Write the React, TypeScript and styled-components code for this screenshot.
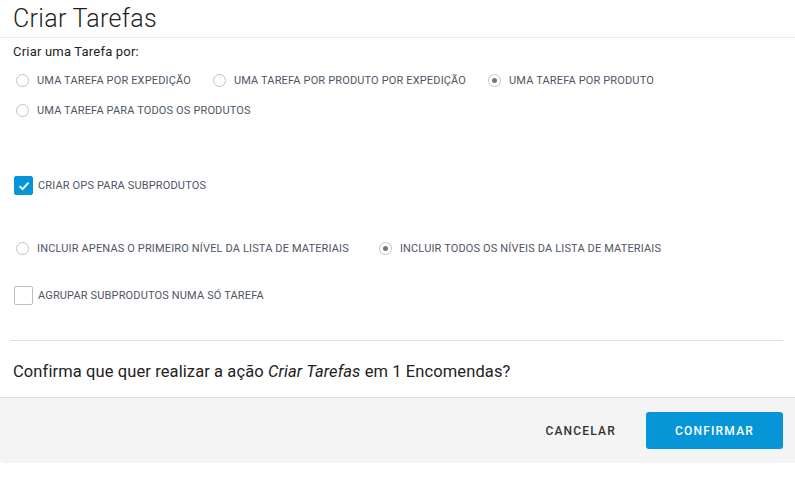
import React, { useState } from 'react';
import styled, { createGlobalStyle } from 'styled-components';

const GlobalStyle = createGlobalStyle`
  html, body {
    margin: 0;
    padding: 0;
    background: #ffffff;
    font-family: Roboto, "Liberation Sans", sans-serif;
  }
`;

const Dialog = styled.div`
  width: 795px;
  background: #fff;
`;

const Header = styled.div`
  height: 37px;
  padding-left: 13px;
  border-bottom: 1px solid #ebebeb;
  display: flex;
  align-items: center;
`;

const Title = styled.h1`
  margin: 0;
  font-size: 25px;
  font-weight: 300;
  letter-spacing: 0.3px;
  color: #1f1f1f;
  line-height: 36px;
`;

const Body = styled.div`
  padding: 5px 12px 0 13px;
`;

const FieldLabel = styled.div`
  font-size: 13px;
  line-height: 18px;
  letter-spacing: 0.2px;
  color: #222;
`;

const OptionGroup = styled.div<{ $top: number; $gap: number }>`
  display: flex;
  flex-wrap: wrap;
  column-gap: ${(p) => p.$gap}px;
  row-gap: 14px;
  margin-top: ${(p) => p.$top}px;
`;

const Option = styled.label`
  display: flex;
  align-items: center;
  gap: 8px;
  height: 16px;
  cursor: pointer;
`;

const RadioCircle = styled.span<{ $checked: boolean }>`
  box-sizing: border-box;
  width: 13px;
  height: 13px;
  margin-left: 3px;
  border-radius: 50%;
  border: 1px solid #c2c2c2;
  background: #fff;
  display: flex;
  align-items: center;
  justify-content: center;

  &::after {
    content: '';
    width: 5px;
    height: 5px;
    border-radius: 50%;
    background: ${(p) => (p.$checked ? '#777' : 'transparent')};
  }
`;

const OptionText = styled.span`
  font-size: 11px;
  letter-spacing: 0.15px;
  text-transform: uppercase;
  color: #4f5564;
  white-space: nowrap;
`;

const CheckRow = styled.label<{ $top: number }>`
  display: flex;
  align-items: center;
  gap: 5px;
  height: 19px;
  margin-top: ${(p) => p.$top}px;
  cursor: pointer;
`;

const CheckBox = styled.span<{ $checked: boolean }>`
  box-sizing: border-box;
  width: 19px;
  height: 19px;
  margin-left: 1px;
  border-radius: 2px;
  border: 1px solid ${(p) => (p.$checked ? '#0696d7' : '#bdbdbd')};
  background: ${(p) => (p.$checked ? '#0696d7' : '#fff')};
  display: flex;
  align-items: center;
  justify-content: center;
`;

const Separator = styled.hr`
  margin: 35px 0 0 -3px;
  border: 0;
  border-top: 1px solid #e0e0e0;
`;

const Question = styled.p`
  margin: 20px 0 14px;
  font-size: 16.5px;
  line-height: 22px;
  letter-spacing: 0.1px;
  color: #222;

  em {
    font-style: italic;
  }
`;

const Footer = styled.div`
  height: 51px;
  padding: 14px 12px 0 0;
  background: #f4f4f4;
  border-top: 1px solid #dcdcdc;
  border-bottom-left-radius: 4px;
  display: flex;
  justify-content: flex-end;
  align-items: flex-start;
`;

const Button = styled.button<{ $primary?: boolean }>`
  height: 37px;
  border: 0;
  border-radius: 3px;
  font-family: Roboto, "Liberation Sans", sans-serif;
  font-size: 12px;
  font-weight: 500;
  letter-spacing: 1.2px;
  cursor: pointer;
  background: ${(p) => (p.$primary ? '#0696d7' : 'transparent')};
  color: ${(p) => (p.$primary ? '#fff' : '#333')};
  width: ${(p) => (p.$primary ? '137px' : 'auto')};
  padding: ${(p) => (p.$primary ? '0' : '0 16px')};
  margin-right: ${(p) => (p.$primary ? '0' : '14px')};
`;

const Check = () => (
  <svg width="12" height="10" viewBox="0 0 12 10">
    <path d="M1.5 5.2 L4.6 8.2 L10.5 1.6" fill="none" stroke="#fff" strokeWidth="1.8" />
  </svg>
);

const taskModes = [
  'Uma tarefa por expedição',
  'Uma tarefa por produto por expedição',
  'Uma tarefa por produto',
  'Uma tarefa para todos os produtos',
];

const levels = [
  'Incluir apenas o primeiro nível da lista de materiais',
  'Incluir todos os níveis da lista de materiais',
];

const App = () => {
  const [mode, setMode] = useState(2);
  const [level, setLevel] = useState(1);
  const [createOps, setCreateOps] = useState(true);
  const [group, setGroup] = useState(false);

  return (
    <Dialog>
      <GlobalStyle />
      <Header>
        <Title>Criar Tarefas</Title>
      </Header>
      <Body>
        <FieldLabel>Criar uma Tarefa por:</FieldLabel>
        <OptionGroup $top={11} $gap={19}>
          {taskModes.map((m, i) => (
            <Option key={m} onClick={() => setMode(i)}>
              <RadioCircle $checked={mode === i} />
              <OptionText>{m}</OptionText>
            </Option>
          ))}
        </OptionGroup>

        <CheckRow $top={58} onClick={() => setCreateOps(!createOps)}>
          <CheckBox $checked={createOps}>{createOps && <Check />}</CheckBox>
          <OptionText>Criar OPs para subprodutos</OptionText>
        </CheckRow>

        <OptionGroup $top={45} $gap={27}>
          {levels.map((l, i) => (
            <Option key={l} onClick={() => setLevel(i)}>
              <RadioCircle $checked={level === i} />
              <OptionText>{l}</OptionText>
            </Option>
          ))}
        </OptionGroup>

        <CheckRow $top={30} onClick={() => setGroup(!group)}>
          <CheckBox $checked={group}>{group && <Check />}</CheckBox>
          <OptionText>Agrupar subprodutos numa só tarefa</OptionText>
        </CheckRow>

        <Separator />
        <Question>
          Confirma que quer realizar a ação <em>Criar Tarefas</em> em 1 Encomendas?
        </Question>
      </Body>
      <Footer>
        <Button>CANCELAR</Button>
        <Button $primary>CONFIRMAR</Button>
      </Footer>
    </Dialog>
  );
};

export default App;
